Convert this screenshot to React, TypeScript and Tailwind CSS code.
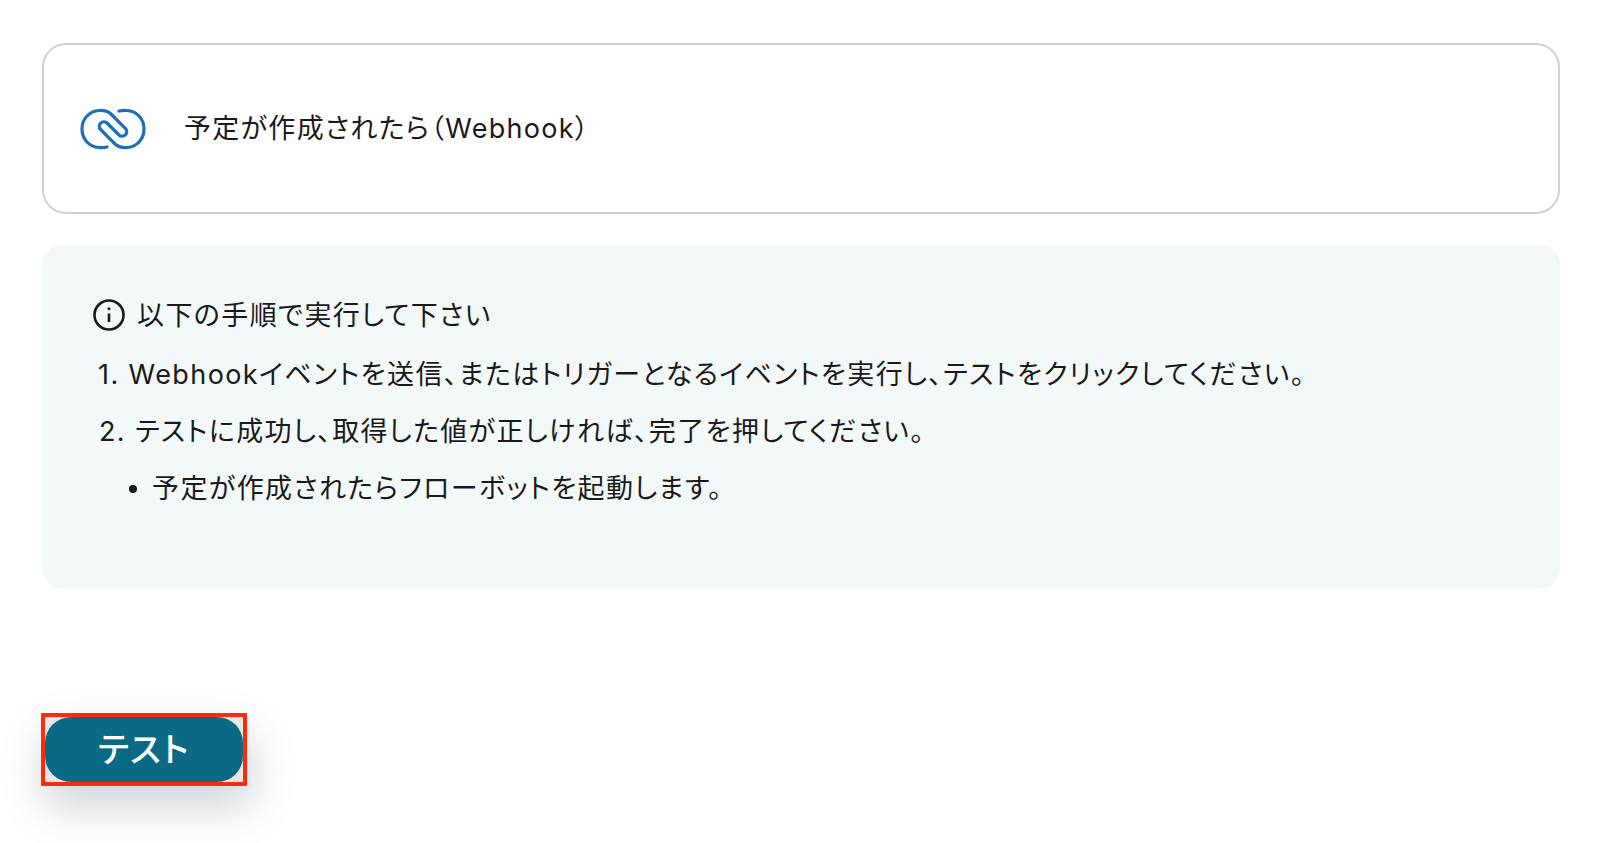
export default function App() {
  return (
    <div className="min-h-[843px] overflow-hidden bg-white pl-[42px] pr-[40px] pt-[43px] text-[#1a1a1a] [font-family:Inter,'Noto_Sans_CJK_JP',sans-serif] [font-feature-settings:'palt']">
      <div className="flex h-[171px] items-center rounded-[24px] border-2 border-[#d0d0d0] pl-[36px]">
        <svg width="66" height="42" viewBox="0 0 66 42" fill="none" stroke="#1b6fb8" strokeWidth="3.2" strokeLinecap="round">
          <path d="M27 39 C24 39.7 21 39.8 19 39.5 C9 38.8 2 31 2 21 C2 11 9 3.2 19 2.5 C24 2.2 28.5 3.7 31 6 L45.5 20.5 A4.6 4.6 0 0 1 39 27 L27 15 A4.6 4.6 0 0 0 20.5 21.5 L35 36 C37.5 38.3 42 39.8 47 39.5 C57 38.8 64 31 64 21 C64 11 57 3.2 47 2.5 C45 2.2 42 2.3 39 3" />
        </svg>
        <span className="ml-[38px] text-[27px] leading-none tracking-[1.3px]">予定が作成されたら（Webhook）</span>
      </div>
      <div className="mt-[31px] h-[344px] rounded-[20px] bg-[#f3f9f9] pl-[51px] pt-[52px] text-[27px] leading-[57px] tracking-[1.4px]">
        <div className="flex h-[36px] items-center">
          <svg width="32" height="32" viewBox="0 0 32 32" fill="none" stroke="#1a1a1a" strokeWidth="2.6">
            <circle cx="16" cy="16" r="14.5" />
            <path d="M16 14.5 V23" />
            <circle cx="16" cy="9.8" r="1.5" fill="#1a1a1a" stroke="none" />
          </svg>
          <span className="ml-[12px] leading-none">以下の手順で実行して下さい</span>
        </div>
        <ol className="mt-[13px]">
          <li className="pl-[5px]">1. Webhookイベントを送信、またはトリガーとなるイベントを実行し、テストをクリックしてください。</li>
          <li className="pl-[6px]">2. テストに成功し、取得した値が正しければ、完了を押してください。</li>
        </ol>
        <div className="flex items-center pl-[36px]">
          <span className="mr-[15px] h-[8px] w-[8px] rounded-full bg-[#1a1a1a]" />
          <span>予定が作成されたらフローボットを起動します。</span>
        </div>
      </div>
      <div className="ml-[-1px] mt-[124px] h-[73px] w-[206px] border-[4px] border-[#ff2a0a] bg-[#e8e8e8] shadow-[4px_20px_44px_rgba(30,60,80,0.22)]">
        <button className="flex h-full w-full items-center justify-center rounded-[26px] bg-[#0a6a84] text-[34px] font-medium leading-none tracking-[1.5px] text-white">テスト</button>
      </div>
    </div>
  );
}
